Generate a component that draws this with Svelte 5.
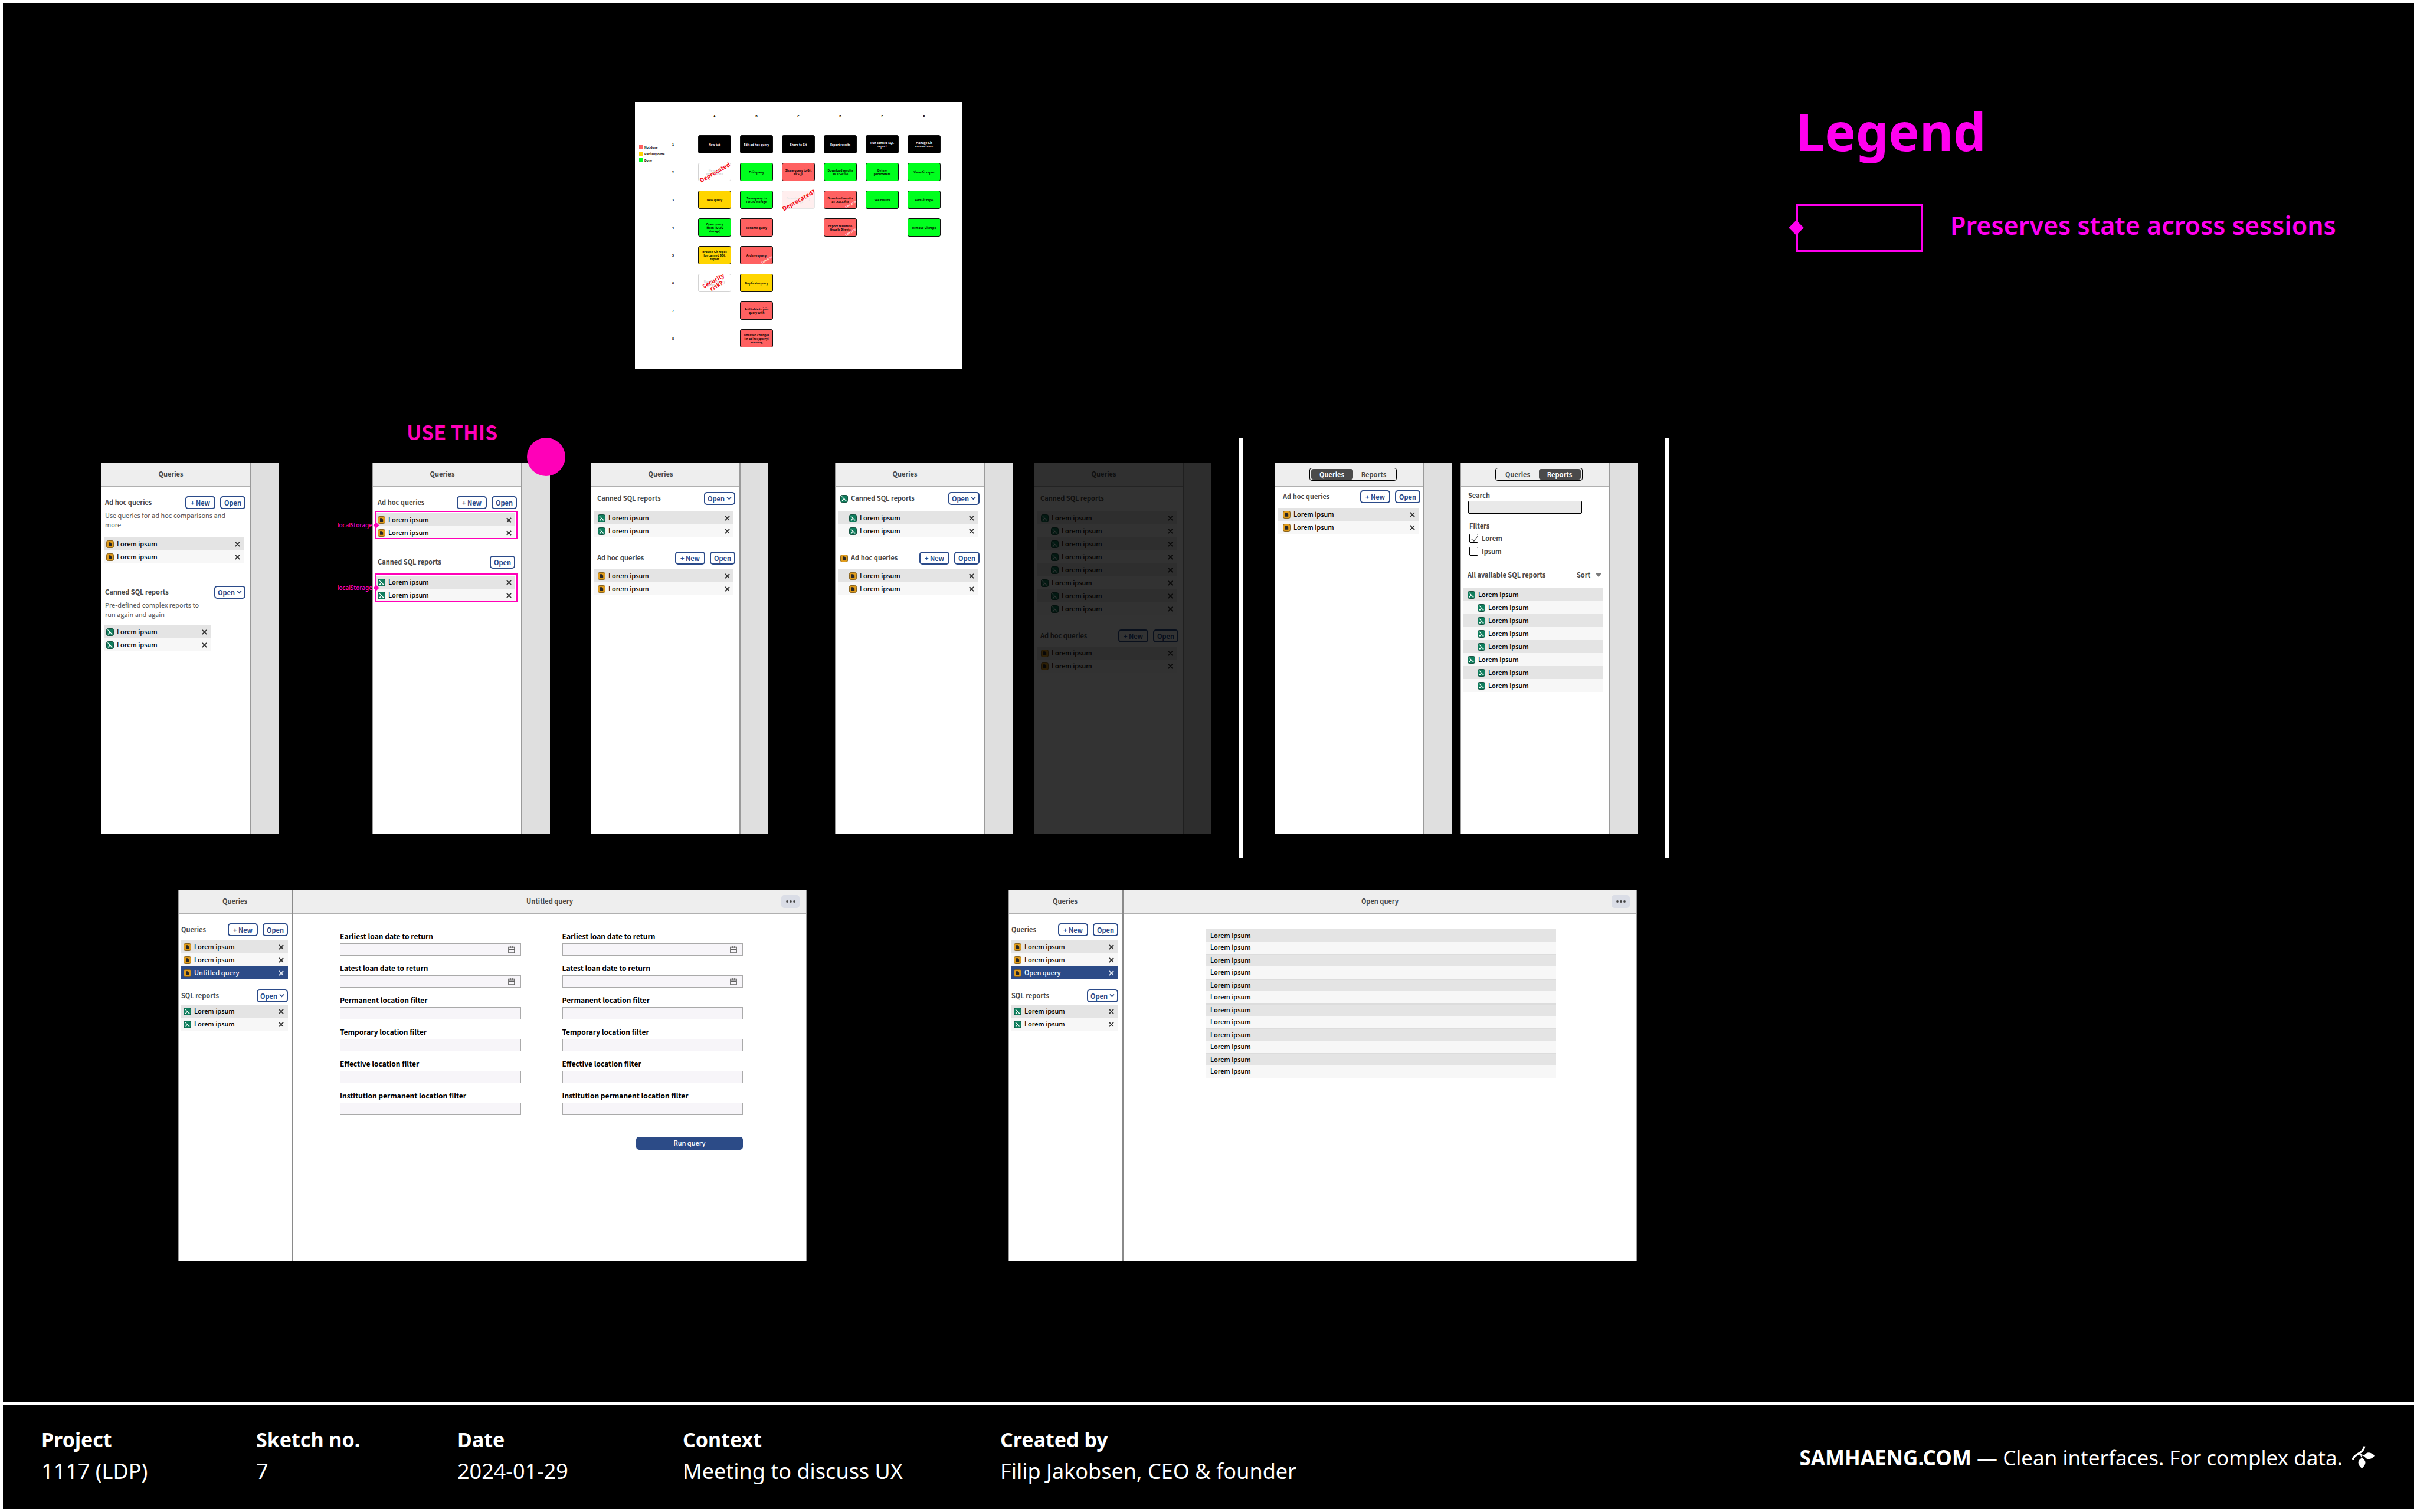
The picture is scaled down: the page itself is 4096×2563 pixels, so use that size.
<script>
  const cols = ['A', 'B', 'C', 'D', 'E', 'F'];
  const story = [
    [
      { t: 'New tab', k: 'goal' }, { t: 'Edit ad hoc query', k: 'goal' }, { t: 'Share to Git', k: 'goal' },
      { t: 'Export results', k: 'goal' }, { t: 'Run canned SQL\nreport', k: 'goal' }, { t: 'Manage Git\nconnections', k: 'goal' }
    ],
    [
      { t: 'New tab\nempty state', k: 'off', stamp: 'Deprecated' }, { t: 'Edit query', k: 'done' },
      { t: 'Share query to Git\nas SQL', k: 'todo' }, { t: 'Download results\nas .CSV file', k: 'done' },
      { t: 'Define\nparameters', k: 'done' }, { t: 'View Git repos', k: 'done' }
    ],
    [
      { t: 'New query', k: 'part' }, { t: 'Save query to\nFOLIO storage', k: 'done' },
      { t: 'Download query\nas SQL', k: 'todo faded', stamp: 'Deprecated?' },
      { t: 'Download results\nas .XSLX file', k: 'todo', low: true }, { t: 'See results', k: 'done' }, { t: 'Add Git repo', k: 'done' }
    ],
    [
      { t: 'Open query\n(from FOLIO\nstorage)', k: 'done' }, { t: 'Rename query', k: 'todo' }, null,
      { t: 'Export results to\nGoogle Sheets', k: 'todo', low: true }, null, { t: 'Remove Git repo', k: 'done' }
    ],
    [{ t: 'Browse Git repos\nfor canned SQL\nreport', k: 'part' }, { t: 'Archive query', k: 'todo', low: true }, null, null, null, null],
    [{ t: 'Run SQL query\nfrom URL', k: 'off', stamp: 'Security\nrisk?' }, { t: 'Duplicate query', k: 'part' }, null, null, null, null],
    [null, { t: 'Add table to join\nquery with', k: 'todo' }, null, null, null, null],
    [null, { t: 'Unsaved changes\n(in ad hoc query)\nwarning', k: 'todo' }, null, null, null, null]
  ];

  const lorem = { text: 'Lorem ipsum' };
  const pair = [lorem, lorem];
  const nested = { text: 'Lorem ipsum', sub: true };
  const tree = [lorem, nested, nested, nested, nested, lorem, nested, nested];
  const openList = Array(12).fill('Lorem ipsum');

  const fields = [
    { label: 'Earliest loan date to return', date: true },
    { label: 'Latest loan date to return', date: true },
    { label: 'Permanent location filter' },
    { label: 'Temporary location filter' },
    { label: 'Effective location filter' },
    { label: 'Institution permanent location filter' }
  ];

  const meta = [
    ['Project', '1117 (LDP)'],
    ['Sketch no.', '7'],
    ['Date', '2024-01-29'],
    ['Context', 'Meeting to discuss UX'],
    ['Created by', 'Filip Jakobsen, CEO & founder']
  ];
</script>

{#snippet queryIcon()}
  <svg class="icon" viewBox="0 0 14 14" aria-hidden="true">
    <rect x="0.5" y="0.5" width="13" height="13" rx="3" fill="#e09c1d" stroke="#7c5713" />
    <path d="M4.3 3.6h3.3l2.3 2.5v4.4H4.3z" fill="#262626" />
  </svg>
{/snippet}

{#snippet reportIcon()}
  <svg class="icon" viewBox="0 0 14 14" aria-hidden="true">
    <rect x="0.5" y="0.5" width="13" height="13" rx="3" fill="#0f7e5d" stroke="#0a4635" />
    <path d="M2.6 2.6l7.6 7.8M7 7.2l-2.8 3.2" fill="none" stroke="#fff" stroke-width="1.1" />
    <path d="M6 6.4h2v1.8H6zM9.2 9.5h2v1.7h-2zM3.1 9.5h2v1.7h-2z" fill="#fff" />
  </svg>
{/snippet}

{#snippet kindIcon(kind)}
  {#if kind === 'query'}{@render queryIcon()}{:else}{@render reportIcon()}{/if}
{/snippet}

{#snippet head(title, actions, kind)}
  <div class="head">
    {#if kind}{@render kindIcon(kind)}{/if}
    <h3>{title}</h3>
    {#each actions as a}
      {#if a === 'menu'}
        <button class="btn menu" type="button">Open
          <svg viewBox="0 0 9 7" aria-hidden="true"><path d="M1 1.5l3.5 3.7L8 1.5" fill="none" stroke="currentColor" stroke-width="1.7" /></svg>
        </button>
      {:else}
        <button class="btn" class:new={a === '+ New'} type="button">{a}</button>
      {/if}
    {/each}
  </div>
{/snippet}

{#snippet rows(items, kind, closable = true)}
  <ul class="rows">
    {#each items as it}
      <li class:sub={it.sub} class:selected={it.selected}>
        {@render kindIcon(kind)}
        <span>{it.text}</span>
        {#if closable}
          <button class="close" type="button" aria-label="Close">
            <svg viewBox="0 0 10 10" aria-hidden="true"><path d="M1 1l8 8M9 1l-8 8" stroke="currentColor" stroke-width="2" /></svg>
          </button>
        {/if}
      </li>
    {/each}
  </ul>
{/snippet}

{#snippet tabs(active)}
  <div class="tabs">
    {#each ['Queries', 'Reports'] as t}
      <button type="button" class:active={t === active}>{t}</button>
    {/each}
  </div>
{/snippet}

{#snippet sidebar(current)}
  <div class="side">
    <header class="bar"><h2>Queries</h2></header>
    <div class="body high">
      {@render head('Queries', ['+ New', 'Open'])}
      <div class="mt-7">{@render rows([lorem, lorem, { text: current, selected: true }], 'query')}</div>
      <div class="mt-17">{@render head('SQL reports', ['menu'])}</div>
      <div class="mt-4">{@render rows(pair, 'report')}</div>
    </div>
  </div>
{/snippet}

{#snippet titleBar(title)}
  <header class="bar wide">
    <h2>{title}</h2>
    <button class="more" type="button" aria-label="More">
      <svg viewBox="0 0 16 4" aria-hidden="true"><circle cx="2" cy="2" r="1.9" /><circle cx="8" cy="2" r="1.9" /><circle cx="14" cy="2" r="1.9" /></svg>
    </button>
  </header>
{/snippet}

<div class="sheet">
  <main>
    <section class="top">
      <div class="board">
        <ul class="key">
          <li><i class="todo"></i>Not done</li>
          <li><i class="part"></i>Partially done</li>
          <li><i class="done"></i>Done</li>
        </ul>
        <div class="map">
          <span></span>
          {#each cols as c}<b class="col">{c}</b>{/each}
          {#each story as line, n}
            <b class="num">{n + 1}</b>
            {#each line as card}
              {#if card}
                <div class="cell">
                  <div class="card {card.k}">{card.t}</div>
                  {#if card.stamp}<div class="stamp">{card.stamp}</div>{/if}
                  {#if card.low}<div class="low">Low prio</div>{/if}
                </div>
              {:else}
                <span></span>
              {/if}
            {/each}
          {/each}
        </div>
      </div>
      <aside class="legend">
        <h1>Legend</h1>
        <div class="entry"><span class="swatch"><i></i></span><p>Preserves state across sessions</p></div>
      </aside>
    </section>

    <section class="panels">
      <article class="panel p1">
        <div class="pane">
          <header class="bar shift"><h2>Queries</h2></header>
          <div class="body high">
            {@render head('Ad hoc queries', ['+ New', 'Open'])}
            <p class="note">Use queries for ad hoc comparisons and more</p>
            <div class="mt-14">{@render rows(pair, 'query')}</div>
            <div class="mt-38">{@render head('Canned SQL reports', ['menu'])}</div>
            <p class="note narrow">Pre-defined complex reports to run again and again</p>
            <div class="mt-11 short">{@render rows(pair, 'report')}</div>
          </div>
        </div>
      </article>

      <article class="panel p2">
        <p class="use">USE THIS</p>
        <i class="dot"></i>
        <div class="pane">
          <header class="bar shift"><h2>Queries</h2></header>
          <div class="body high">
            {@render head('Ad hoc queries', ['+ New', 'Open'])}
            <div class="mt-7 kept">
              {@render rows(pair, 'query')}
              <div class="outline"><i></i><span>localStorage</span></div>
            </div>
            <div class="mt-28 pull">{@render head('Canned SQL reports', ['Open'])}</div>
            <div class="mt-12 kept">
              {@render rows(pair, 'report')}
              <div class="outline"><i></i><span>localStorage</span></div>
            </div>
          </div>
        </div>
      </article>

      <article class="panel p3">
        <div class="pane">
          <header class="bar shift"><h2>Queries</h2></header>
          <div class="body mid">
            {@render head('Canned SQL reports', ['menu'])}
            <div class="mt-11">{@render rows(pair, 'report')}</div>
            <div class="mt-24">{@render head('Ad hoc queries', ['+ New', 'Open'])}</div>
            <div class="mt-8">{@render rows(pair, 'query')}</div>
          </div>
        </div>
      </article>

      <article class="panel p4">
        <div class="pane">
          <header class="bar shift"><h2>Queries</h2></header>
          <div class="body mid">
            {@render head('Canned SQL reports', ['menu'], 'report')}
            <div class="mt-11">{@render rows(pair, 'report')}</div>
            <div class="mt-24">{@render head('Ad hoc queries', ['+ New', 'Open'], 'query')}</div>
            <div class="mt-8">{@render rows(pair, 'query')}</div>
          </div>
        </div>
      </article>

      <article class="panel p5">
        <div class="pane">
          <header class="bar shift"><h2>Queries</h2></header>
          <div class="body mid">
            {@render head('Canned SQL reports', [])}
            <div class="mt-11">{@render rows(tree, 'report')}</div>
            <div class="mt-24">{@render head('Ad hoc queries', ['+ New', 'Open'])}</div>
            <div class="mt-7">{@render rows(pair, 'query')}</div>
          </div>
        </div>
      </article>

      <div class="rule r1"></div>

      <article class="panel p6">
        <div class="pane">
          <header class="bar">{@render tabs('Queries')}</header>
          <div class="body low-top">
            {@render head('Ad hoc queries', ['+ New', 'Open'])}
            <div class="mt-8">{@render rows(pair, 'query')}</div>
          </div>
        </div>
      </article>

      <article class="panel p7">
        <div class="pane">
          <header class="bar">{@render tabs('Reports')}</header>
          <div class="body low-top">
            <div class="search"><label for="search">Search</label><input id="search" type="text" /></div>
            <fieldset>
              <legend>Filters</legend>
              <label><input type="checkbox" checked />Lorem</label>
              <label><input type="checkbox" />Ipsum</label>
            </fieldset>
            <div class="mt-19 sortline">
              <h3>All available SQL reports</h3>
              <select aria-label="Sort"><option>Sort</option></select>
              <svg viewBox="0 0 10 6" aria-hidden="true"><path d="M0 0h10L5 6z" fill="#7a7a7a" /></svg>
            </div>
            <div class="mt-11">{@render rows(tree, 'report', false)}</div>
          </div>
        </div>
      </article>

      <div class="rule r2"></div>
    </section>

    <section class="screens">
      <article class="screen s1">
        {@render sidebar('Untitled query')}
        <div class="content">
          {@render titleBar('Untitled query')}
          <form>
            {#each [1, 2] as c}
              <div class="column">
                {#each fields as f, i}
                  <div class="field">
                    <label for="f{c}{i}">{f.label}</label>
                    <div class="box">
                      <input id="f{c}{i}" type="text" />
                      {#if f.date}
                        <svg viewBox="0 0 12 13" aria-hidden="true">
                          <path d="M1 2.7h10v9.4H1zM1 6.3h10M3.9 0v4M8.1 0v4" fill="none" stroke="#606060" stroke-width="1.7" />
                        </svg>
                      {/if}
                    </div>
                  </div>
                {/each}
              </div>
            {/each}
            <button class="run" type="button">Run query</button>
          </form>
        </div>
      </article>

      <article class="screen s2">
        {@render sidebar('Open query')}
        <div class="content">
          {@render titleBar('Open query')}
          <ul class="plain">
            {#each openList as item}<li>{item}</li>{/each}
          </ul>
        </div>
      </article>
    </section>
  </main>

  <footer>
    <dl>
      {#each meta as [k, v]}<div><dt>{k}</dt><dd>{v}</dd></div>{/each}
    </dl>
    <p class="brand"><b>SAMHAENG.COM</b> — Clean interfaces. For complex data.</p>
    <svg class="logo" viewBox="0 0 124 124" aria-hidden="true">
      <path d="M4 78C8 42 62 46 68 2" fill="none" stroke="#fff" stroke-width="11" />
      <path d="M32 44c18 0 24 10 40 11M48 52c6 6 7 10 7 20" fill="none" stroke="#fff" stroke-width="5" />
      <path d="M68 55c8-24 36-24 56 0c-20 24-48 24-56 0z" fill="#fff" />
      <path d="M54 66c26 14 26 36 0 58c-26-22-26-44 0-58z" fill="#fff" />
    </svg>
  </footer>
</div>

<style>
  :global(body) { margin: 0; background: #000; }

  .sheet {
    box-sizing: border-box;
    min-height: 100vh;
    display: flex;
    flex-direction: column;
    border: 5px solid #fff;
    background: #000;
    color: #fff;
    font-family: "Noto Sans", sans-serif;
  }
  .sheet :global(*) { box-sizing: border-box; }
  h1, h2, h3, p, ul, dl, dd { margin: 0; padding: 0; }
  ul { list-style: none; }
  button, input, select { font: inherit; margin: 0; padding: 0; }
  button { cursor: pointer; }
  main { flex: 1; }

  /* story map */
  .top {
    display: grid;
    grid-template-columns: 1071fr 555fr 1412fr 1048fr;
    padding-top: 161px;
  }
  .board {
    grid-column: 2;
    display: flex;
    align-items: flex-start;
    height: 453px;
    margin-top: 7px;
    background: #fff;
    color: #000;
    font-family: "Noto Sans CJK SC", "Noto Sans", sans-serif;
    font-size: 5px;
    font-weight: 700;
    line-height: 6px;
  }
  .key { flex: none; width: 37px; padding: 71px 0 0 7px; }
  .key li { display: flex; align-items: center; gap: 2px; height: 11px; white-space: nowrap; }
  .key i { flex: none; width: 7px; height: 7px; }
  .map {
    display: grid;
    grid-template-columns: 55px repeat(6, 56px);
    grid-template-rows: 24px repeat(8, 31px);
    gap: 16px 15px;
    padding-top: 16px;
  }
  .col { line-height: 16px; text-align: center; }
  .num { align-self: center; text-align: center; }
  .cell { position: relative; }
  .card {
    display: flex;
    align-items: center;
    justify-content: center;
    height: 31px;
    border: 1px solid #111;
    border-radius: 3px;
    text-align: center;
    white-space: pre;
  }
  .goal { background: #000; color: #fff; }
  .done { background: #00ff1e; }
  .todo { background: #ff6161; }
  .part { background: #ffd500; }
  .off { opacity: 0.18; }
  .faded { opacity: 0.1; }
  .stamp {
    position: absolute;
    inset: 0;
    display: flex;
    align-items: center;
    justify-content: center;
    transform: rotate(-30deg);
    color: #f5141d;
    font-family: "Noto Sans", sans-serif;
    font-size: 10px;
    line-height: 10px;
    text-align: center;
    white-space: pre;
  }
  .low {
    position: absolute;
    right: 0;
    bottom: 5px;
    transform: rotate(-30deg);
    color: #fff;
    font-family: "Noto Sans", sans-serif;
    font-weight: 500;
    white-space: nowrap;
  }

  /* legend */
  .legend { grid-column: 4; color: #ff00ee; }
  .legend h1 { font-size: 88px; font-weight: 700; line-height: 112px; }
  .entry { display: flex; align-items: center; gap: 46px; margin-top: 67px; }
  .entry p { padding-bottom: 9px; font-size: 43px; font-weight: 600; line-height: 60px; }
  .swatch { position: relative; width: 216px; height: 83px; border: 4px solid currentColor; }
  .swatch i {
    position: absolute;
    left: -12px;
    top: 28px;
    width: 18px;
    height: 18px;
    background: currentColor;
    transform: rotate(45deg);
  }

  /* panel row */
  .panels, .screens {
    display: grid;
    font-family: "Noto Sans CJK SC", "Noto Sans", sans-serif;
    font-size: 11px;
    line-height: 16px;
  }
  .panels {
    grid-template-columns:
      166fr 301fr 159fr 301fr 69fr 301fr 113fr 301fr 36fr 301fr
      46fr 7fr 54fr 301fr 14fr 301fr 46fr 7fr 1262fr;
    margin-top: 116px;
  }
  .p1 { grid-column: 2; }
  .p2 { grid-column: 4; }
  .p3 { grid-column: 6; }
  .p4 { grid-column: 8; }
  .p5 { grid-column: 10; opacity: 0.2; }
  .p6 { grid-column: 14; }
  .p7 { grid-column: 16; }
  .r1 { grid-column: 12; }
  .r2 { grid-column: 18; }
  .panel, .rule { grid-row: 1; }
  .rule { background: #fff; }
  .panel {
    position: relative;
    display: flex;
    min-width: 0;
    height: 629px;
    margin: 42px 0;
    background: #dfdfdf;
    color: #000;
  }
  .pane {
    flex: 1;
    min-width: 0;
    margin-right: 47px;
    border: solid #9a9a9a;
    border-width: 1px 2px 0 1px;
    background: #fff;
  }
  .bar {
    display: flex;
    align-items: center;
    justify-content: center;
    height: 40px;
    border-bottom: 2px solid #b0b0b0;
    background: #eee;
  }
  .bar.shift { padding-right: 16px; }
  h2, h3 { padding-bottom: 2px; color: #4a4a4a; font-size: 11px; font-weight: 700; line-height: 16px; }

  .body { --inset: 2px; --row: 4px; padding: 0 7px 0 4px; }
  .high { padding-top: 16px; }
  .mid { padding-top: 9px; }
  .low-top { padding-top: 6px; }
  .p2 .body { --inset: 4px; }
  .p3 .body, .p5 .body { --inset: 6px; --row: 7px; }
  .p4 .body { --inset: 4px; --row: 19px; }
  .p6 .body { --inset: 8px; --row: 8px; padding: 6px 5px 0 5px; }
  .p7 .body { --inset: 7px; --row: 7px; }

  .head { display: flex; align-items: center; gap: 8px; height: 22px; padding-left: var(--inset); }
  .head h3 { flex: 1; white-space: nowrap; }
  .head > :global(svg) { margin-right: -3px; }
  .pull { padding-right: 3px; }
  .btn {
    width: 43px;
    height: 22px;
    padding-bottom: 1px;
    border: 2px solid #2b4b8a;
    border-radius: 5px;
    background: #fff;
    color: #2b4b8a;
    font-weight: 700;
    line-height: 16px;
  }
  .btn.new { width: 51px; }
  .btn.menu { display: flex; align-items: center; justify-content: center; gap: 3px; width: 53px; }
  .btn.menu svg { width: 9px; height: 7px; }

  .mt-4 { margin-top: 4px; }
  .mt-7 { margin-top: 7px; }
  .mt-8 { margin-top: 8px; }
  .mt-11 { margin-top: 11px; }
  .mt-12 { margin-top: 12px; }
  .mt-14 { margin-top: 14px; }
  .mt-17 { margin-top: 17px; }
  .mt-19 { margin-top: 19px; }
  .mt-24 { margin-top: 24px; }
  .mt-28 { margin-top: 28px; }
  .mt-38 { margin-top: 38px; }

  .note { max-width: 230px; margin-top: 2px; padding-left: 2px; color: #555; }
  .narrow { max-width: 180px; }
  .short { padding-right: 56px; }

  .rows { margin-right: 3px; font-weight: 500; }
  .rows li { display: flex; align-items: center; gap: 5px; height: 22px; padding: 0 6px 0 var(--row); background: #e4e4e4; }
  .rows li:nth-child(even) { background: #f7f7f7; }
  .rows li.sub { padding-left: 24px; }
  .rows li.selected { background: #2c4b87; color: #fff; }
  .rows span { flex: 1; padding-bottom: 2px; white-space: nowrap; }
  .icon { flex: none; width: 13px; height: 13px; }
  .close { display: flex; border: 0; background: none; color: #333; }
  .selected .close { color: #dfe5f0; }
  .close svg { width: 9px; height: 9px; }

  /* pink notes on the chosen panel */
  .use {
    position: absolute;
    left: 58px;
    top: -76px;
    color: #ff00b8;
    font-size: 34px;
    font-weight: 700;
    line-height: 48px;
    white-space: nowrap;
  }
  .dot { position: absolute; right: -26px; top: -42px; width: 65px; height: 65px; border-radius: 50%; background: #ff00b8; }
  .kept { position: relative; }
  .outline { position: absolute; inset: -4px -1px 0 0; border: 2px solid #ff00b8; pointer-events: none; }
  .outline i {
    position: absolute;
    left: -4px;
    top: 19px;
    width: 7px;
    height: 7px;
    background: #ff00b8;
    transform: rotate(45deg);
  }
  .outline span {
    position: absolute;
    right: 100%;
    top: 14px;
    margin-right: 7px;
    color: #ff00b8;
    font-family: "Noto Sans", sans-serif;
    font-size: 10px;
    font-weight: 500;
  }

  .tabs {
    display: flex;
    width: 148px;
    height: 22px;
    margin-left: 12px;
    padding: 1px 2px;
    border: 1px solid #000;
    border-radius: 4px;
  }
  .tabs button { flex: 1; padding-bottom: 1px; border: 0; border-radius: 4px; background: none; color: #4a4a4a; font-weight: 700; line-height: 16px; }
  .tabs .active { background: #4a4a4a; color: #fff; }

  .search, fieldset { padding: 0 0 0 8px; color: #4a4a4a; font-weight: 700; }
  .search label { display: block; }
  .search input {
    display: block;
    width: 193px;
    height: 22px;
    margin-top: 2px;
    border: 1px solid #000;
    border-radius: 2px;
    background: #e9e9e9;
  }
  fieldset { min-width: 0; margin: 12px 0 0; padding-left: 10px; border: 0; }
  legend { padding: 0; margin-bottom: 2px; }
  fieldset label { display: flex; align-items: center; gap: 6px; height: 22px; }
  fieldset input {
    appearance: none;
    width: 15px;
    height: 15px;
    border: 1px solid #000;
    border-radius: 2px;
    background: #fff;
  }
  fieldset input:checked::after {
    content: "";
    display: block;
    width: 5px;
    height: 10px;
    margin: 0 0 0 5px;
    border: solid #333;
    border-width: 0 1px 1px 0;
    transform: rotate(38deg);
  }
  .sortline { display: flex; align-items: center; gap: 8px; height: 22px; padding: 0 6px 0 7px; }
  .sortline h3 { flex: 1; white-space: nowrap; }
  .sortline select { appearance: none; padding-bottom: 2px; border: 0; background: none; color: #4a4a4a; font-weight: 700; line-height: 16px; }
  .sortline svg { width: 10px; height: 6px; }

  /* full screens */
  .screens { grid-template-columns: 297fr 1065fr 342fr 1065fr 1317fr; margin-top: 53px; }
  .s1 { grid-column: 2; }
  .s2 { grid-column: 4; }
  .screen {
    display: flex;
    min-width: 0;
    height: 629px;
    border: solid #9a9a9a;
    border-width: 1px 1px 0 1px;
    background: #fff;
    color: #000;
  }
  .side { flex: none; width: 194px; border-right: 2px solid #8a8a8a; }
  .side .body { --inset: 0px; padding-right: 7px; }
  .side .rows { margin-right: 0; }
  .side .bar { padding-right: 2px; }
  .side .rows li { padding-right: 7px; }
  .content { flex: 1; min-width: 0; }
  .bar.wide { position: relative; }
  .more {
    position: absolute;
    right: 11px;
    top: 8px;
    display: flex;
    align-items: center;
    justify-content: center;
    width: 31px;
    height: 22px;
    border: 0;
    border-radius: 5px;
    background: #dadde6;
  }
  .more svg { width: 16px; height: 4px; fill: #444; }

  form {
    display: grid;
    grid-template-columns: 1fr 1fr;
    column-gap: 70px;
    padding: 30px 107px 0 79px;
  }
  .column { display: grid; gap: 13px; }
  .field label { display: block; margin-bottom: 4px; font-size: 12px; font-weight: 700; line-height: 16px; }
  .box {
    display: flex;
    align-items: center;
    height: 21px;
    padding-right: 9px;
    border: 1px solid #aaa;
    background: #f7f5f9;
  }
  .box input { flex: 1; min-width: 0; height: 19px; border: 0; background: none; }
  .box svg { width: 12px; height: 13px; }
  .run {
    grid-column: 2;
    justify-self: end;
    width: 181px;
    height: 22px;
    margin-top: 37px;
    padding-bottom: 2px;
    border: 0;
    border-radius: 5px;
    background: #2c4b87;
    color: #fff;
    font-weight: 500;
    line-height: 16px;
  }
  .plain { margin: 26px 136px 0 139px; font-weight: 500; }
  .plain li { height: 21px; padding-left: 8px; line-height: 19px; background: #f7f7f7; }
  .plain li:nth-child(odd) { border-top: 2px solid #dcdcdc; line-height: 16px; background: #e4e4e4; }
  .plain li:first-child { border-top-color: #e4e4e4; }

  footer {
    display: flex;
    align-items: center;
    height: 182px;
    padding: 0 67px 0 65px;
    border-top: 6px solid #fff;
    font-size: 36px;
    line-height: 53px;
    white-space: nowrap;
  }
  dl { flex: 1; display: grid; grid-template-columns: 364px 341px 382px 538px 1fr; margin-top: -6px; }
  dt { font-size: 34px; font-weight: 700; }
  .brand { font-size: 35px; }
  .logo { width: 38px; height: 38px; margin-left: 16px; }
</style>
